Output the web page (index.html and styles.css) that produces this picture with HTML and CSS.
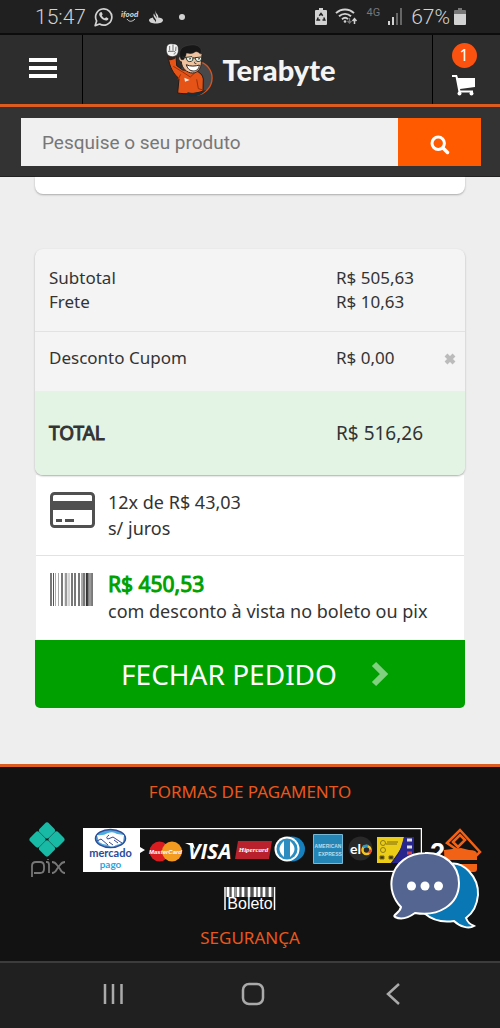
FILE: index.html
```html
<!DOCTYPE html>
<html lang="pt-BR">
<head>
<meta charset="utf-8">
<meta name="viewport" content="width=device-width, initial-scale=1">
<title>Terabyte - Carrinho</title>
<link rel="stylesheet" href="styles.css">
</head>
<body>
<div class="status">
  <div class="status-group">
    <span class="status-text">15:47</span>
    <svg width="19" height="20" viewBox="0 0 19 20" fill="none" stroke="#d2d2d2"><path d="M1.2 18.6l1.4-4.7a8.1 8.1 0 1 1 3 3.1z" stroke-width="1.7" stroke-linejoin="round"/><path d="M6.6 5.3c.7-.4 1.200-.1 1.400.5l.6 1.500c.1.400-.800 1-.7 1.400.6 1.200 1.600 2.100 2.900 2.600.5 0 1-1.200 1.500-1l1.900.9c.4.300 0 1.500-.5 1.900-1.200.9-2.700.5-4.200-.300-2-1-3.500-2.700-4.200-4.500-.4-1.200.2-2.300 1.300-3z" fill="#d2d2d2" stroke="none"/></svg>
    <svg width="19" height="13" viewBox="0 0 19 13"><text x="0" y="7" class="ifood">ifood</text><path d="M6 9c2 3 5 3 8 0" fill="none" stroke="#d2d2d2"/></svg>
    <svg width="16" height="14" viewBox="0 0 16 14"><path d="M8 0c-.6 2 .2 3 1.400 4.600.8 1.100 1 2 .8 3C12.600 8 15 8.600 15 10.300 15 12.300 11.800 13.600 8 13.600s-7-1.300-7-3.300c0-1.500 1.800-2.300 4-2.700-.1 1.800 3 3.400 2.600 4.600.9-1.200.5-2.400-.5-3.700C5.500 6.500 5 5.200 6 3.300c.1 1.700 2.300 3.500 2.700 5C9.300 6 6.300 4 8 0z" fill="#d2d2d2"/></svg>
    <span class="status-dot"></span>
  </div>
  <div class="status-group status-right">
    <svg width="12" height="18" viewBox="0 0 12 18"><path d="M4 0h4v2h3a1 1 0 0 1 1 1v13a1 1 0 0 1-1 1H1a1 1 0 0 1-1-1V3a1 1 0 0 1 1-1h3z" fill="#d2d2d2"/><path d="M4.300 7.800L6 5.500l1.700 2.300M8.800 9.500l1 2.500H7.500M5.200 12H2.200l1-2.500" fill="none" stroke="#202020" stroke-width="1.500"/></svg>
    <svg width="23" height="17" viewBox="0 0 23 17" fill="none" stroke="#d2d2d2" stroke-width="1.900"><path d="M1 5.200c5-5 13-5 18 0M4 8.300c3.500-3.300 8.500-3.300 12 0M7 11.200c2-1.700 4.300-1.700 6 0"/><circle cx="10" cy="13.500" r="1.300" fill="#d2d2d2" stroke="none"/><path d="M14.500 10v5m-2-2l2 2 2-2" stroke="#777" stroke-width="1.300"/><path d="M19.500 16v-5m-2 2l2-2.300 2 2.300" stroke-width="1.500"/></svg>
    <span class="net">4G</span>
    <svg width="15" height="17" viewBox="0 0 15 17"><path d="M0 13h2v4H0zM4 9h2v8H4z" fill="#d2d2d2"/><path d="M8 5h2v12H8zM12 0h2v17h-2z" fill="#666"/></svg>
    <span class="status-text charge">67%<svg width="12" height="17" viewBox="0 0 12 17"><path d="M4 0h4v2h3a1 1 0 0 1 1 1v3H0V3a1 1 0 0 1 1-1h3z" fill="#777"/><path d="M0 6h12v10a1 1 0 0 1-1 1H1a1 1 0 0 1-1-1z" fill="#d2d2d2"/></svg></span>
  </div>
</div>

<header class="top">
  <button class="menu" aria-label="Menu"><i></i><i></i><i></i></button>
  <a class="brand" href="#">
    <svg width="50" height="54" viewBox="48 18 150 162">
      <circle cx="139" cy="123" r="51" fill="#48484a"/>
      <path d="M160 77a51 51 0 0 1-18 97" fill="none" stroke="#d9541e" stroke-width="4"/>
      <path d="M141 174a51 51 0 0 1-34-12" fill="none" stroke="#266080" stroke-width="5"/>
      <path d="M57 57l24-1 2 30 18 13 38 2c14 5 22 12 24 25l-1 36c-22 9-52 10-76 6l4-43c-15-13-29-33-33-68z" fill="#e55316" stroke="#221b18" stroke-width="3"/>
      <path d="M143 127l5 28 15 4M73 88l28 17 23 15 17-16M87 128l8-16" fill="none" stroke="#96310c" stroke-width="3"/>
      <path d="M56 55l-2 12c8 5 19 2 26-4l-1-9z" fill="#37231d"/>
      <path d="M52 33c1-11 10-15 20-12 11-2 17 6 16 15 2 13-5 23-18 23-12 0-20-9-18-26z" fill="#f4f4f4" stroke="#222" stroke-width="2"/>
      <path d="M62 27v14M72 24v17M81 29l-1 13M57 43h17c7 0 6 8 0 8" fill="none" stroke="#555" stroke-width="2.500"/>
      <path d="M99 59c-11-6-14 12-2 15 1 19 16 34 34 34 17-1 25-15 26-31l2-25-10-12-43 4z" fill="#f0c3a0" stroke="#2b211e" stroke-width="3"/>
      <path d="M96 68c-7-15-4-29 4-36 12-9 42-12 51-2 7 5 7 15 3 22-5-7-13-10-19-5-9 5-19 2-23 2-1 10-4 14-9 20z" fill="#171717" stroke="#4b4b4b"/>
      <path d="M111 61l18-2 3 3-1 8c-4 5-14 5-17 0zM138 62l18-2 2 3-2 8c-5 4-13 3-15-1zM111 62l-11-2M131 63h7" fill="#edf4e8" stroke="#253a33" stroke-width="3"/>
      <path d="M120 66l6-1M147 66l6-1M138 74c-3 4-1 6 4 6" fill="none" stroke="#302621" stroke-width="3"/>
      <path d="M112 83c11 6 28 5 39 1-1 12-8 18-18 18-11 0-18-8-21-19z" fill="#fff" stroke="#302019" stroke-width="3"/>
      <path d="M106 122l16 7-14 5z" fill="#f6e7dc"/>
      <path d="M117 166c20 5 38 0 55-8-15 20-46 26-62 13z" fill="#172e3b"/>
    </svg>
    <span>Terabyte</span>
  </a>
  <a class="cart" href="#" aria-label="Carrinho">
    <span class="badge">1</span>
    <svg width="24" height="21" viewBox="0 0 24 21"><path d="M0 0h5l1 3h17v9L8 14l.4 1.500H21v2H6.600L3.600 2H0z" fill="#fff"/><circle cx="7.500" cy="18.500" r="2" fill="#fff"/><circle cx="19.500" cy="18.500" r="2" fill="#fff"/></svg>
  </a>
</header>

<form class="search">
  <input type="text" placeholder="Pesquise o seu produto" aria-label="Pesquise o seu produto">
  <button type="button" aria-label="Buscar"><svg width="20" height="20" viewBox="0 0 20 20" fill="none" stroke="#fff"><circle cx="8.200" cy="8.200" r="6.200" stroke-width="3"/><path d="M13 13l4.500 4.500" stroke-width="3.500" stroke-linecap="round"/></svg></button>
</form>

<main class="page">
  <div class="previous"></div>
  <section class="summary">
    <div class="costs">
      <div class="line"><span>Subtotal</span><span>R$ 505,63</span></div>
      <div class="line"><span>Frete</span><span>R$ 10,63</span></div>
    </div>
    <div class="line coupon"><span>Desconto Cupom</span><span>R$ 0,00</span>
      <button aria-label="Remover cupom"><svg width="12" height="12" viewBox="0 0 12 12"><path d="M2 2l8 8M10 2l-8 8" stroke="#bbb" stroke-width="4"/></svg></button>
    </div>
    <div class="line total"><strong>TOTAL</strong><span>R$ 516,26</span></div>
  </section>
  <section class="payment">
    <div class="option">
      <svg width="46" height="38" viewBox="0 0 46 38"><rect x="1.500" y="2.500" width="42" height="33" rx="3" fill="none" stroke="#505050" stroke-width="3"/><path d="M1 10h43v9H1zM6 28h6v3H6zM15 28h9v3h-9z" fill="#505050"/></svg>
      <p>12x de R$ 43,03<br>s/ juros</p>
    </div>
    <div class="option cash">
      <svg width="46" height="34" viewBox="0 0 46 34"><path d="M1 1v33M12 1v33M22 1v33M25 1v33M29 1v33M34 1v33M38 1v33M42 1v33" stroke="#4c4c4c" stroke-width="1.500"/><path d="M3.500 1v33M32 1v33" stroke="#555"/><path d="M5.500 1v33M8.500 1v33M19 1v33" stroke="#aaa"/><path d="M16 1v33M40 1v33" stroke="#999" stroke-width="2.500"/><path d="M36.800 1v33" stroke="#333" stroke-width="2"/></svg>
      <p><b>R$ 450,53</b><br>com desconto à vista no boleto ou pix</p>
    </div>
  </section>
  <button class="checkout">FECHAR PEDIDO <svg width="18" height="26" viewBox="0 0 18 26"><path d="M3 3l10 10L3 23" fill="none" stroke="#80d080" stroke-width="6"/></svg></button>
</main>

<footer class="footer">
  <h2>FORMAS DE PAGAMENTO</h2>
  <div class="methods">
    <svg width="49" height="60" viewBox="0 0 49 60" role="img" aria-label="pix">
      <g fill="#18b9a5"><rect x="12.500" y="4" width="13" height="13" rx="3" transform="rotate(45 19 10.500)"/><rect x="3" y="13" width="13" height="13" rx="3" transform="rotate(45 9.500 19.500)"/><rect x="22" y="13" width="13" height="13" rx="3" transform="rotate(45 28.500 19.500)"/><rect x="12.500" y="22" width="13" height="13" rx="3" transform="rotate(45 19 28.500)"/></g>
      <path d="M4 57V46q0-4 4-4h4q4 0 4 4v3q0 4-4 4H6M18 42h1q2 0 2 3v8M24 42q3 0 5 3l3 4q2 4 5 4M24 53q3 0 5-4l3-4q2-3 5-3M20 39v1" fill="none" stroke="#777" stroke-width="1.800"/>
    </svg>
    <svg class="cards" width="339" height="44" viewBox="83 828 339 44" role="img" aria-label="Mercado Pago">
      <rect x="83.500" y="828.500" width="338" height="43" fill="#121212" stroke="#fff" stroke-width="1.500"/>
      <path d="M83 828h57v19l5 3-5 3v19H83z" fill="#fff"/>
      <ellipse cx="110.500" cy="838.500" rx="15" ry="9" fill="#4cacdf" stroke="#344a96" stroke-width="1.500"/>
      <path d="M97 835q6 1 11-2 5-2 9 1l7 1-1 7q-4 3-7 3-4 3-8 0-5 0-9-3z" fill="#fff"/><path d="M97 841l4-2 7 6m1-10q-4 3-1 4l5-2 9 6m-8-3l4 3m-9-1l4 3" fill="none" stroke="#344a96"/>
      <text x="110.500" y="857" text-anchor="middle" class="mercado">mercado</text><text x="110.500" y="868" text-anchor="middle" class="pago">pago</text>
      <circle cx="159.500" cy="851.500" r="10" fill="#d91c20"/><circle cx="172" cy="851.500" r="10" fill="#f39b21"/><text x="165.500" y="854" text-anchor="middle" class="master">MasterCard</text>
      <text x="188" y="859" class="visa">VISA</text><path d="M185 843h8l2 6q-4-4-10-6z" fill="#fff"/>
      <path d="M238 841h34l-3 18h-34z" fill="#b9222c"/><text x="253.500" y="852" text-anchor="middle" class="hiper">Hipercard</text>
      <ellipse cx="292" cy="849" rx="13" ry="12.500" fill="#1580bd"/><circle cx="287" cy="849" r="12.500" fill="#fff"/><circle cx="287" cy="849" r="10.500" fill="#2b8dc0"/><path d="M284 841q-9 8 0 16zM290 841q9 8 0 16z" fill="#fff"/>
      <path d="M313.500 834.500h29v29h-29z" fill="#2586b6" stroke="#76b9d6"/><text x="328" y="848" text-anchor="middle" class="amex">AMERICAN</text><text x="330" y="856" text-anchor="middle" class="amex">EXPRESS</text>
      <circle cx="360.500" cy="848.500" r="12" fill="#292929"/><text x="350" y="854" class="elo">el</text><circle cx="366.500" cy="850" r="4" fill="none" stroke="#f0c527" stroke-width="2.500"/><path d="M363 847q2-2 5-1" stroke="#2a9acb" stroke-width="2.500" fill="none"/><path d="M369 853l2-3" stroke="#e4472b" stroke-width="2.500"/>
      <path d="M377 837h27q-1 9-6 16l-7 10h-14z" fill="#ebcd18"/><path d="M404 837h10v26h-23q9-10 10-16z" fill="#26268c"/><path d="M387 842h11M386 844h11M380 856h4v3h-4zM389 856h4v3h-4z" stroke="#7c6a12" fill="#363413"/><circle cx="383" cy="843" r="2.500" fill="none" stroke="#8a7921"/><circle cx="383" cy="850" r="2.500" fill="none" stroke="#8a7921"/><path d="M407 840h5M407 847h5" stroke="#ddd" stroke-width="3"/><path d="M407 853h5" stroke="#d54443" stroke-width="3"/>
    </svg>
    <svg width="54" height="44" viewBox="428 824 54 44" role="img" aria-label="2 cartões"><g stroke="#f26216" stroke-width="2.500" fill="none"><path d="M447 839l13-13 20 22-8 8zM453 838l7-7 5 5-7 7z"/></g><path d="M444 846l17-2 8 2q8 0 8 4v15q0 3-3 3h-29z" fill="#f26216"/><path d="M443 856h34v4h-34z" fill="#121212"/><text x="430" y="858" class="two">2</text></svg>
  </div>
  <svg class="boleto" width="52" height="26" viewBox="0 0 52 26"><path d="M1 1v23M50.500 1v23" stroke="#fff" stroke-width="1.500"/><path d="M4 1v10M9 1v10M14 1v10M19 1v10M25 1v10M31 1v10M35 1v10M40 1v10M46 1v10" stroke="#fff" stroke-width="3"/><path d="M6 1v10M11.500 1v10M17 1v10M22 1v10M28 1v10M38 1v10M43 1v10M48 1v10" stroke="#999"/><text x="26" y="23" text-anchor="middle" class="boleto-text">Boleto</text></svg>
  <h2>SEGURANÇA</h2>
</footer>

<button class="chat" aria-label="Abrir chat"><svg width="90" height="80" viewBox="390 850 90 80"><path d="M446 865c17-7 33 13 32 30-1 11-5 18-12 23 2 5 4 6 8 8-5 3-14 1-20-5-12 2-23-2-30-8z" fill="#0877b4" stroke="#fff" stroke-width="2"/><path d="M425 853c19-1 34 12 34 30 0 22-21 34-44 30-7 5-14 7-20 4-3-2 5-4 6-10-8-8-11-19-9-29 3-15 17-25 33-25z" fill="#536590" stroke="#fff" stroke-width="2"/><g fill="#fff"><circle cx="411.500" cy="886" r="4.500"/><circle cx="425" cy="886" r="4.500"/><circle cx="438.500" cy="886" r="4.500"/></g></svg></button>

<nav class="device">
  <button aria-label="Recentes"><svg width="24" height="24" viewBox="0 0 24 24"><path d="M4 2v20M12 2v20M20.500 2v20" stroke="#aaa" stroke-width="2.500"/></svg></button>
  <button aria-label="Início"><svg width="24" height="24" viewBox="0 0 24 24"><rect x="2" y="2" width="20" height="20" rx="6" fill="none" stroke="#aaa" stroke-width="2.500"/></svg></button>
  <button aria-label="Voltar"><svg width="24" height="24" viewBox="0 0 24 24"><path d="M18 2L7 12l11 10" fill="none" stroke="#aaa" stroke-width="2.500"/></svg></button>
</nav>
</body>
</html>
```

FILE: styles.css
```css
* { box-sizing: border-box; }
body { margin: 0; min-height: 100vh; display: flex; flex-direction: column; position: relative; background: #eee; color: #333; font: 17px/24px "Noto Sans", "Open Sans", sans-serif; }
button { border: 0; padding: 0; background: none; font: inherit; cursor: pointer; }
svg { display: block; flex: none; }
p, h2 { margin: 0; }

.status { height: 35px; padding: 0 34px 0 35px; display: flex; justify-content: space-between; align-items: center; background: #202020; border-bottom: 2px solid #0c0c0c; color: #d2d2d2; }
.status-group { display: flex; align-items: center; gap: 8px; }
.status-text { font: 300 21px/24px Roboto, sans-serif; }
.charge { display: flex; align-items: center; gap: 4px; }
.status-dot { width: 6px; height: 6px; margin-left: 7px; border-radius: 50%; background: #d2d2d2; }
.ifood { font: italic 900 8px Lato, sans-serif; fill: #d2d2d2; }
.net { font: 11px/16px Roboto, sans-serif; color: #777; align-self: flex-start; }

.top { height: 72px; display: grid; grid-template-columns: 83px 1fr 68px; background: #2d2d2d; border-bottom: 3px solid #dc5c20; }
.menu { display: flex; flex-direction: column; justify-content: center; align-items: center; gap: 4px; padding-left: 4px; padding-bottom: 4px; border-right: 1px solid #000; }
.menu i { width: 28px; height: 4px; background: #fff; }
.brand { display: flex; align-items: center; justify-content: center; gap: 7px; padding-right: 14px; text-decoration: none; color: #f4f4f4; font: 900 29px/32px Lato, sans-serif; }
.cart { display: flex; flex-direction: column; align-items: center; justify-content: center; gap: 7px; padding-right: 5px; padding-bottom: 1px; border-left: 1px solid #000; text-decoration: none; }
.badge { width: 25px; height: 25px; border-radius: 50%; background: #fc5210; color: #fff; text-align: center; font: 16px/25px "Noto Sans", sans-serif; }

.search { display: flex; height: 70px; padding: 11px 19px 10px 21px; background: #333; border-bottom: 1px solid #222; }
.search input { flex: 1; min-width: 0; border: 0; border-radius: 0; padding: 2px 21px 0; background: #f0f0f0; color: #333; font: 19px/24px Roboto, sans-serif; }
.search input::placeholder { color: #777; opacity: 1; }
.search button { width: 83px; display: grid; place-items: center; padding-top: 6px; background: #ff5a00; }

.page { padding: 0 35px 56px; display: flex; flex-direction: column; }
.previous { height: 17px; background: #fff; border-radius: 0 0 8px 8px; box-shadow: 0 1px 2px #aaa; margin-bottom: 55px; }
.summary { position: relative; z-index: 1; border-radius: 8px; overflow: hidden; background: #f4f4f4; box-shadow: 0 1px 2px #aaa; }
.line { display: grid; grid-template-columns: 7fr 3fr; align-items: center; position: relative; }
.line > :first-child { padding-left: 14px; }
.costs { padding: 17px 0; border-bottom: 1px solid #e2e2e2; }
.coupon { height: 59px; padding-bottom: 8px; }
.coupon button { position: absolute; right: 9px; top: 21px; }
.total { height: 84px; background: #e3f4e5; font-size: 19px; }
.total strong { font-weight: 400; -webkit-text-stroke: 1px #333; }

.payment { margin: 0 1px; background: #fff; }
.option { display: flex; align-items: flex-start; gap: 12px; padding: 14px; font-size: 18px; line-height: 26px; }
.option svg { margin-top: 2px; }
.option p { min-width: 0; }
.option + .option { border-top: 1px solid #e2e2e2; padding-bottom: 16px; }
.option b { font-size: 21px; font-weight: 400; line-height: 28px; color: #00a000; -webkit-text-stroke: 1px #00a000; }
.checkout { height: 68px; display: flex; align-items: center; justify-content: center; gap: 34px; background: #00a000; color: #fff; border-radius: 0 0 5px 5px; font-size: 28px; padding-left: 10px; }

.footer { flex: 1; display: flex; flex-direction: column; align-items: center; background: #121212; border-top: 3px solid #dc5c20; padding-top: 13px; }
.footer h2 { font-size: 17px; line-height: 24px; font-weight: 400; color: #e8581c; }
.methods { width: 100%; display: flex; justify-content: space-between; align-items: center; padding: 0 18px 0 28px; margin: 16px 0 6px; }
.mercado { font: 700 11px Lato, sans-serif; fill: #294b9d; }
.pago { font: 700 10px Lato, sans-serif; fill: #2ca6df; }
.master { font: italic 700 6px "Liberation Sans", sans-serif; fill: #fff; }
.visa { font: italic 700 21px "Open Sans", sans-serif; fill: #fff; }
.hiper { font: italic 700 7px "Liberation Serif", serif; fill: #fff; }
.amex { font: 700 5px "Liberation Sans", sans-serif; fill: #b8dcec; }
.elo { font: 700 14px Lato, sans-serif; fill: #fff; }
.two { font: 700 27px "Liberation Sans", sans-serif; fill: #fff; }
.boleto { margin-bottom: 14px; }
.boleto-text { font: 16px "Liberation Sans", sans-serif; fill: #fff; }
.chat { position: absolute; right: 20px; bottom: 98px; }

.device { height: 67px; display: grid; grid-template-columns: repeat(3, 140px); justify-content: center; padding: 0 0 3px 6px; background: #202020; border-top: 2px solid #3c3c3c; }
.device button { display: grid; place-items: center; }
```
